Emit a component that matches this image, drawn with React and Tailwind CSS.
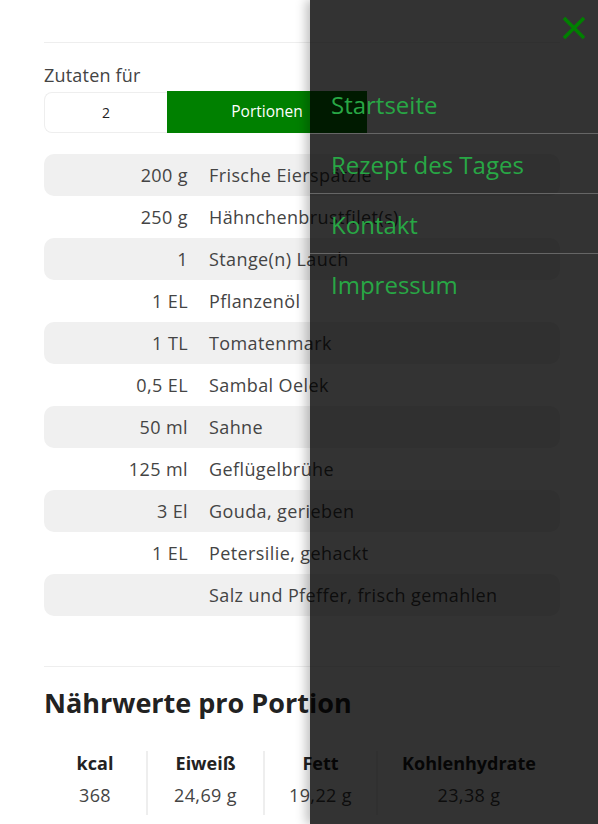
import React from "react";

const rows = [
  ["200 g", "Frische Eierspätzle"],
  ["250 g", "Hähnchenbrustfilet(s)"],
  ["1", "Stange(n) Lauch"],
  ["1 EL", "Pflanzenöl"],
  ["1 TL", "Tomatenmark"],
  ["0,5 EL", "Sambal Oelek"],
  ["50 ml", "Sahne"],
  ["125 ml", "Geflügelbrühe"],
  ["3 El", "Gouda, gerieben"],
  ["1 EL", "Petersilie, gehackt"],
  ["", "Salz und Pfeffer, frisch gemahlen"],
];

const nutr = [
  ["kcal", "368"],
  ["Eiweiß", "24,69 g"],
  ["Fett", "19,22 g"],
  ["Kohlenhydrate", "23,38 g"],
];

const menu = ["Startseite", "Rezept des Tages", "Kontakt", "Impressum"];

export default function App() {
  return (
    <div className="relative min-h-[824px] bg-white overflow-hidden text-[#444]" style={{ fontFamily: "'Open Sans', Lato, sans-serif" }}>
      <div className="ml-[44px] w-[516px]">
        <div className="h-[43px] border-b border-[#eee]"></div>
        <div className="pt-[21px] text-[18px] leading-[22px] tracking-[0.2px] text-[#444]">Zutaten für</div>
        <div className="mt-[5px] flex items-center">
          <div className="flex h-[41px] w-[123px] items-center justify-center rounded-l-[8px] border border-r-0 border-[#eee] text-[14px] text-[#222]">2</div>
          <div className="flex h-[42px] w-[200px] items-center justify-center bg-[#008000] text-[15.5px] text-white">Portionen</div>
        </div>
        <div className="mt-[21px]">
          {rows.map((r, i) => (
            <div key={i} className={`flex h-[42px] items-center rounded-[10px] pt-[1px] text-[18px] tracking-[0.4px] ${i % 2 === 0 ? "bg-[#f0f0f0]" : ""}`}>
              <div className="w-[144px] text-right">{r[0]}</div>
              <div className="pl-[21px]">{r[1]}</div>
            </div>
          ))}
        </div>
        <div className="mt-[50px] border-t border-[#eee]"></div>
        <h2 className="mt-[19px] text-[27px] font-bold leading-[34px] text-[#222]">Nährwerte pro Portion</h2>
        <div className="mt-[31px] grid grid-cols-[102px_117px_113px_184px]">
          {nutr.map((n, i) => (
            <div key={i} className={`flex flex-col items-center ${i > 0 ? "border-l-2 border-[#eee]" : ""}`}>
              <div className="h-[24px] leading-[24px] text-[18px] font-bold text-[#222]">{n[0]}</div>
              <div className="h-[40px] leading-[40px] text-[18px] tracking-[0.4px]">{n[1]}</div>
            </div>
          ))}
        </div>
      </div>

      <div className="absolute right-0 top-0 h-[824px] w-[288px] bg-[rgba(0,0,0,0.8)] shadow-[-4px_0_10px_rgba(0,0,0,0.25)]">
        <div className="absolute right-[12px] top-[16px]">
          <svg width="24" height="24" viewBox="0 0 24 24">
            <path d="M2 2 L22 22 M22 2 L2 22" stroke="#008000" strokeWidth="3.5" strokeLinecap="butt" />
          </svg>
        </div>
        <div className="pt-[74px]">
          {menu.map((m, i) => (
            <div key={i} className={`flex h-[60px] items-center pl-[21px] pt-[2px] text-[24px] text-[#28a745] ${i < menu.length - 1 ? "border-b border-[#666]" : ""}`}>
              {m}
            </div>
          ))}
        </div>
      </div>
    </div>
  );
}
